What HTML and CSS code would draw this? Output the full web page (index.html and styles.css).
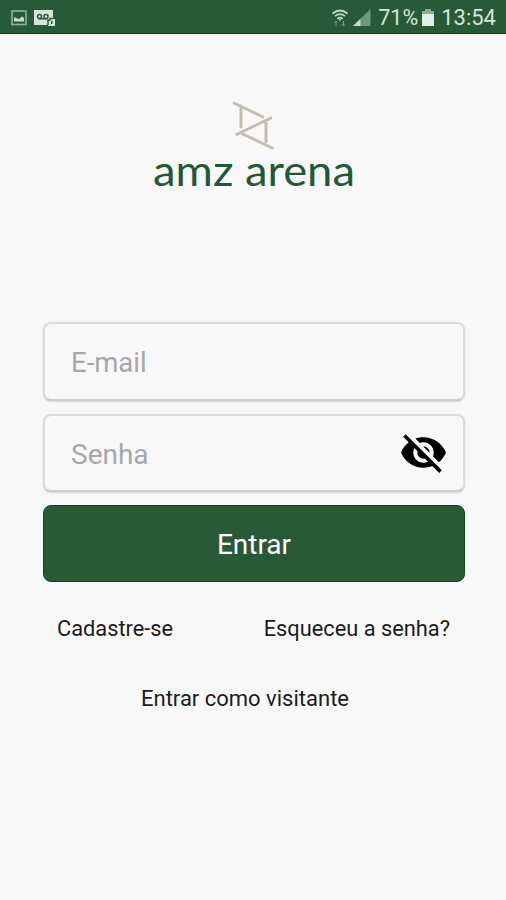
FILE: index.html
```html
<!DOCTYPE html>
<html lang="pt-BR">
<head>
    <meta charset="UTF-8">
    <meta name="viewport" content="width=device-width, initial-scale=1.0">
    <title>amz arena</title>
    <link rel="stylesheet" href="styles.css">
</head>
<body>
    <header class="status-bar">
        <div class="status-left">
            <svg class="icon-picture" width="16" height="16" viewBox="0 0 16 16">
                <rect x="1" y="1" width="14" height="13.500" fill="none" stroke="#8fb39b" stroke-width="1.600"/>
                <path d="M3 11.500V7l2 1 3 1 3-2.500 2 1.500v3.500z" fill="#c5dccb"/>
            </svg>
            <svg class="icon-voicemail" width="22" height="18" viewBox="0 0 22 18">
                <path d="M0 1h19v9h2v7h-7v-1H0z" fill="#d3e6d7"/>
                <g fill="none" stroke="#285a38" stroke-width="1.500">
                    <circle cx="5.500" cy="7.500" r="2"/>
                    <circle cx="12" cy="7.500" r="2"/>
                    <path d="M4 9.800h9M14 16v-5h2V9.500h3"/>
                </g>
                <path d="M17 12h1.500v3H17z" fill="#285a38"/>
            </svg>
        </div>
        <div class="status-right">
            <svg class="icon-wifi" width="18" height="18" viewBox="0 0 18 18">
                <g fill="none" stroke="#bfd8c6" stroke-width="1.700">
                    <path d="M1.500 4.500q7.500-6 15 0M4 7.200q5-4 10 0M6.300 9.700q2.700-2 5.400 0"/>
                </g>
                <path d="M7.500 10h3L9 12z" fill="#bfd8c6"/>
                <path d="M5 17v-5M3.500 13.500L5 12l1.500 1.500M12.500 12v5M11 15.500l1.500 1.500 1.500-1.500" fill="none" stroke="#78a085"/>
            </svg>
            <svg class="icon-signal" width="18" height="18" viewBox="0 0 18 18">
                <path d="M0 17L17.500 0v17z" fill="#6d9a7a"/>
                <path d="M0 17L7.500 9.700V17z" fill="#c5dccb"/>
            </svg>
            <span class="battery-level">71%</span>
            <svg class="icon-battery" width="12" height="18" viewBox="0 0 12 18">
                <path d="M3 0h6v2h3v4H0V2h3z" fill="#8bae96"/>
                <path d="M0 5h12v12H0z" fill="#e4f0e5"/>
            </svg>
            <span class="clock">13:54</span>
        </div>
    </header>

    <main class="container">
        <div class="logo">
            <svg width="204" height="100" viewBox="0 0 204 100">
                <g fill="none" stroke="#c4beae" stroke-width="3">
                    <path d="M81 2.500L112 17.500M89 6V28"/>
                    <path d="M83.500 35L120 17.500"/>
                    <path d="M114 22V43M89.500 33.500L121.500 48.500"/>
                </g>
                <text class="logo-text" x="1" y="85.500" textLength="202" lengthAdjust="spacingAndGlyphs">amz arena</text>
            </svg>
        </div>

        <form class="form">
            <input type="email" class="input-text" placeholder="E-mail">
            <div class="password">
                <input type="password" class="input-text" placeholder="Senha">
                <svg class="icon-eye" width="49" height="49" viewBox="0 0 24 24">
                    <path d="M12 7c2.760 0 5 2.240 5 5 0 .65-.13 1.260-.36 1.830l2.920 2.920c1.510-1.260 2.700-2.890 3.430-4.750-1.730-4.390-6-7.500-11-7.500-1.400 0-2.740.25-3.980.7l2.160 2.160C10.740 7.130 11.350 7 12 7zM2 4.270l2.280 2.280.46.46C3.080 8.300 1.780 10.020 1 12c1.730 4.390 6 7.500 11 7.500 1.550 0 3.030-.3 4.380-.84l.42.42L19.730 22 21 20.730 3.270 3 2 4.270zM7.530 9.800l1.550 1.550c-.05.21-.08.43-.08.65 0 1.660 1.340 3 3 3 .22 0 .44-.03.65-.08l1.550 1.550c-.67.33-1.410.53-2.200.53-2.760 0-5-2.240-5-5 0-.79.2-1.530.53-2.200zm4.310-.78l3.150 3.150.02-.16c0-1.660-1.340-3-3-3l-.17.010z"/>
                </svg>
            </div>
            <button type="button" class="btn-submit">Entrar</button>
        </form>

        <nav class="links">
            <a class="link">Cadastre-se</a>
            <a class="link">Esqueceu a senha?</a>
        </nav>
        <div class="guest">
            <a class="link">Entrar como visitante</a>
        </div>
    </main>
</body>
</html>
```
FILE: styles.css
```css
body {
    font-family: Roboto, sans-serif;
    background-color: #f8f8f8;
    color: #1c1c1c;
    margin: 0;
}

/* barra de status */
.status-bar {
    display: flex;
    justify-content: space-between;
    box-sizing: border-box;
    height: 34px;
    padding: 0 10px 0 11px;
    background-color: #285a38;
    border-bottom: 1px solid #0c4319;
    color: #d3e6d7;
    font-size: 22px;
}

.status-left, .status-right {
    display: flex;
    align-items: center;
    padding-top: 2px;
}

.icon-voicemail {
    margin-left: 7px;
}

.icon-signal {
    margin: 0 7px 0 4px;
}

.icon-battery {
    margin: 0 7px 0 4px;
}

.battery-level {
    font-size: 21.5px;
}

/* conteúdo */
.container {
    padding: 66px 41px 0 43px;
}

.logo {
    display: flex;
    justify-content: center;
    height: 222px;
}

.logo-text {
    font-family: Lato, sans-serif;
    font-size: 42px;
    fill: #1f5a38;
}

.form {
    display: flex;
    flex-direction: column;
    gap: 13px;
}

.input-text {
    display: block;
    box-sizing: border-box;
    width: 100%;
    height: 79px;
    padding: 2px 26px 0;
    border: 2px solid #dcdcdc;
    border-bottom-color: #cdcdcd;
    border-radius: 8px;
    background-color: #f8f8f8;
    box-shadow: 0 1px 2px rgba(0, 0, 0, 0.15);
    font-family: inherit;
    font-size: 27.5px;
}

.input-text::placeholder {
    color: #a8a8a8;
}

.password {
    position: relative;
}

.password .input-text {
    height: 78px;
    font-size: 28px;
}

.icon-eye {
    position: absolute;
    top: 14px;
    right: 17px;
}

.btn-submit {
    height: 77px;
    padding: 2px 0 0;
    border: 1px solid #0f471d;
    border-radius: 8px;
    background-color: #285a38;
    color: #ffffff;
    font-family: inherit;
    font-size: 28px;
}

.links {
    display: flex;
    justify-content: space-between;
    padding: 34px 15px 0 14px;
}

.links .link {
    font-size: 21.8px;
}

.guest {
    padding: 44px 0 0 98px;
}

.link {
    font-size: 22px;
    line-height: 26px;
}
```
